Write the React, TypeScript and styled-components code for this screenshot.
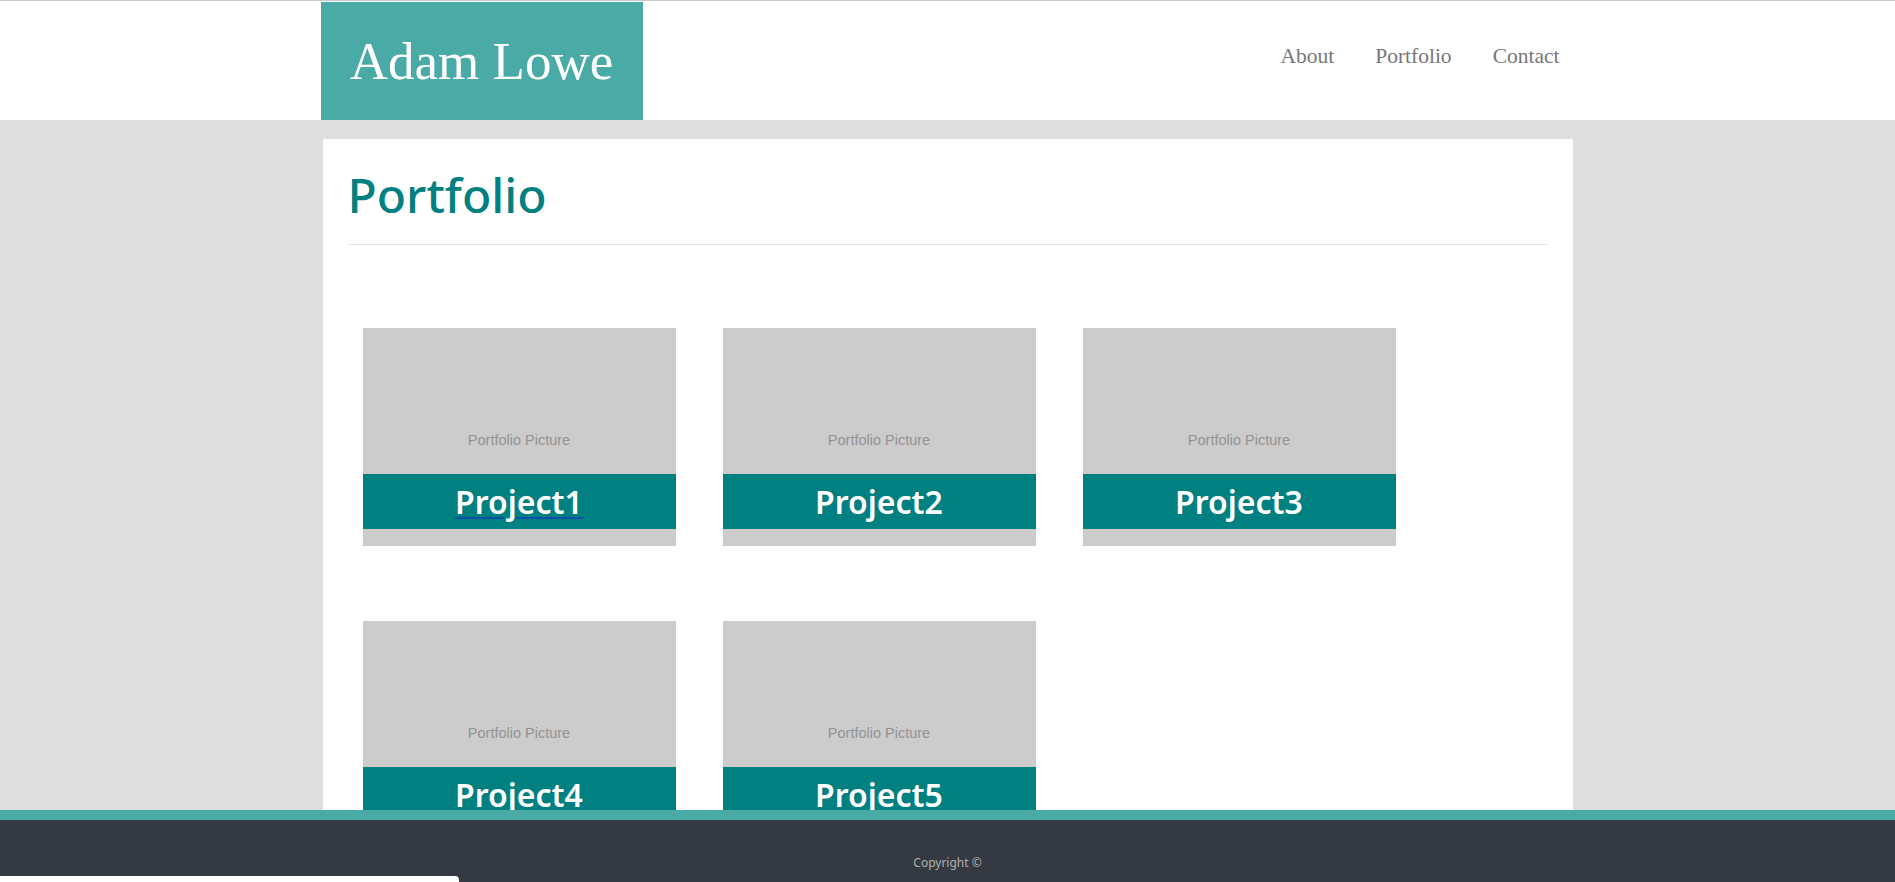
import { styled, createGlobalStyle } from 'styled-components';

const GlobalStyle = createGlobalStyle`
  html, body {
    margin: 0;
    padding: 0;
    background-color: #dddddd;
  }
  * {
    box-sizing: border-box;
  }
`

const Header = styled.header`
  background-color: #ffffff;
  border-top: 1px solid #cccccc;
  padding-top: 1px;
`

const HeaderInner = styled.div`
  width: 1254px;
  margin: 0 auto;
  display: flex;
  justify-content: space-between;
  align-items: flex-start;
`

const Logo = styled.a`
  display: flex;
  align-items: center;
  justify-content: center;
  width: 322px;
  height: 118px;
  background-color: #4aaaa5;
  color: #ffffff;
  font-family: "Liberation Serif", serif;
  font-size: 53px;
  line-height: 1.15;
  text-decoration: none;
`

const Nav = styled.nav`
  display: flex;
  gap: 41px;
  padding: 42px 15px 0 0;
`

const NavLink = styled.a`
  font-family: "Liberation Serif", serif;
  font-size: 21.5px;
  line-height: 1.15;
  color: #777777;
  text-decoration: none;
  cursor: pointer;
`

const Main = styled.main`
  width: 1250px;
  min-height: 760px;
  margin: 19px auto 0;
  padding: 23px 25px 120px;
  background-color: #ffffff;
`

const Title = styled.h1`
  margin: 0 0 17px;
  font-family: "Noto Sans", sans-serif;
  font-size: 48px;
  font-weight: 500;
  line-height: normal;
  color: #008080;
`

const Rule = styled.hr`
  margin: 0;
  border: none;
  border-top: 1px solid #e5e5e5;
`

const Grid = styled.div`
  display: grid;
  grid-template-columns: repeat(3, 313px);
  column-gap: 47px;
  row-gap: 75px;
  margin-top: 83px;
  padding-left: 15px;
`

const Card = styled.div`
  display: flex;
  flex-direction: column;
  height: 218px;
  background-color: #cccccc;
`

const Picture = styled.div`
  height: 146px;
  padding-top: 104px;
  text-align: center;
  font-family: "Liberation Sans", Arial, sans-serif;
  font-size: 14.5px;
  line-height: normal;
  color: #939393;
`

const Band = styled.div`
  height: 55px;
  background-color: #008080;
  text-align: center;
`

const ProjectLink = styled.a<{ $active?: boolean }>`
  font-family: "Noto Sans", sans-serif;
  font-size: 32px;
  font-weight: 600;
  line-height: 55px;
  color: #ffffff;
  text-decoration: ${props => props.$active ? 'underline' : 'none'};
  text-decoration-color: #0b4fa8;
  text-decoration-thickness: 2px;
  text-underline-offset: 3px;
  cursor: pointer;
`

const Footer = styled.footer`
  position: fixed;
  left: 0;
  right: 0;
  bottom: 0;
  height: 72px;
  border-top: 10px solid #4aaaa5;
  background-color: #353a42;
  padding-top: 35px;
  text-align: center;
  font-family: "Noto Sans", sans-serif;
  font-size: 12px;
  line-height: 16px;
  color: #b0b0b0;
`

const StatusBubble = styled.div`
  position: fixed;
  left: 0;
  bottom: 0;
  width: 459px;
  height: 6px;
  background-color: #ffffff;
  border-top-right-radius: 4px;
`

const projects = ['Project1', 'Project2', 'Project3', 'Project4', 'Project5'];

function App() {
  return (
    <>
      <GlobalStyle />
      <Header>
        <HeaderInner>
          <Logo>Adam Lowe</Logo>
          <Nav>
            <NavLink>About</NavLink>
            <NavLink>Portfolio</NavLink>
            <NavLink>Contact</NavLink>
          </Nav>
        </HeaderInner>
      </Header>
      <Main>
        <Title>Portfolio</Title>
        <Rule />
        <Grid>
          {projects.map((name, index) => (
            <Card key={name}>
              <Picture>Portfolio Picture</Picture>
              <Band>
                <ProjectLink $active={index === 0}>{name}</ProjectLink>
              </Band>
            </Card>
          ))}
        </Grid>
      </Main>
      <Footer>Copyright ©</Footer>
      <StatusBubble />
    </>
  )
}

export default App;
